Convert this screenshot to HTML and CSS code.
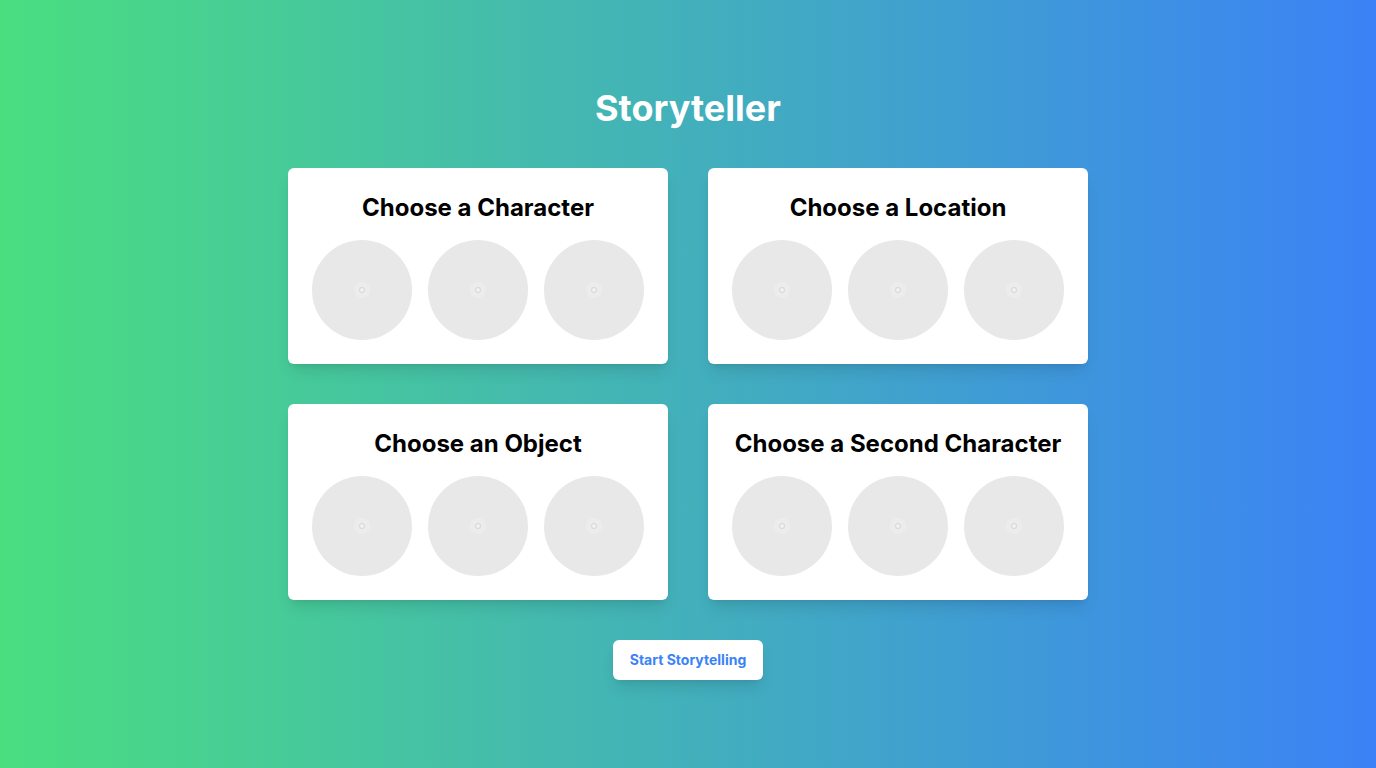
FILE: index.html
```html
<!DOCTYPE html>
<html lang="en">
<head>
<meta charset="utf-8">
<title>Storyteller</title>
<link rel="stylesheet" href="styles.css">
</head>
<body>
<main class="page">
  <h1 class="title">Storyteller</h1>
  <div class="grid">
    <section class="card">
      <h2 class="card-title">Choose a Character</h2>
      <div class="options">
        <div class="option"><span class="ph"></span></div>
        <div class="option"><span class="ph"></span></div>
        <div class="option"><span class="ph"></span></div>
      </div>
    </section>
    <section class="card">
      <h2 class="card-title">Choose a Location</h2>
      <div class="options">
        <div class="option"><span class="ph"></span></div>
        <div class="option"><span class="ph"></span></div>
        <div class="option"><span class="ph"></span></div>
      </div>
    </section>
    <section class="card">
      <h2 class="card-title">Choose an Object</h2>
      <div class="options">
        <div class="option"><span class="ph"></span></div>
        <div class="option"><span class="ph"></span></div>
        <div class="option"><span class="ph"></span></div>
      </div>
    </section>
    <section class="card">
      <h2 class="card-title">Choose a Second Character</h2>
      <div class="options">
        <div class="option"><span class="ph"></span></div>
        <div class="option"><span class="ph"></span></div>
        <div class="option"><span class="ph"></span></div>
      </div>
    </section>
  </div>
  <button class="start">Start Storytelling</button>
</main>
</body>
</html>
```

FILE: styles.css
```css
* { box-sizing: border-box; }
html, body { margin: 0; padding: 0; }
body {
  min-height: 100vh;
  background: linear-gradient(to right, #4ade80, #3b82f6);
  font-family: Inter, "Noto Sans", sans-serif;
}
.page {
  display: flex;
  flex-direction: column;
  align-items: center;
  padding-top: 88px;
}
.title {
  margin: 0 0 40px;
  font-size: 36px;
  line-height: 40px;
  font-weight: 700;
  color: #fff;
}
.grid {
  display: grid;
  grid-template-columns: 380px 380px;
  gap: 40px;
}
.card {
  background: #fff;
  border-radius: 6px;
  padding: 24px;
  box-shadow: 0 10px 15px -3px rgba(0,0,0,0.1), 0 4px 6px -4px rgba(0,0,0,0.1);
  display: flex;
  flex-direction: column;
  align-items: center;
}
.card-title {
  margin: 0 0 16px;
  font-size: 24px;
  line-height: 32px;
  font-weight: 700;
  color: #000;
  text-align: center;
}
.options {
  display: flex;
  gap: 16px;
}
.option {
  width: 100px;
  height: 100px;
  border-radius: 50%;
  background: #e8e8e8;
  display: flex;
  align-items: center;
  justify-content: center;
}
.ph {
  width: 6px;
  height: 6px;
  border-radius: 50%;
  border: 1.5px solid #d6d6d6;
  background: #f2f2f2;
  box-shadow: 0 0 0 5px #ececec;
}
.start {
  margin-top: 40px;
  width: 150px;
  background: #fff;
  border: none;
  border-radius: 6px;
  padding: 10px 16px;
  font-family: Inter, "Noto Sans", sans-serif;
  font-size: 14px;
  line-height: 20px;
  font-weight: 700;
  color: #3b82f6;
  box-shadow: 0 10px 15px -3px rgba(0,0,0,0.1), 0 4px 6px -4px rgba(0,0,0,0.1);
  cursor: pointer;
}
```
